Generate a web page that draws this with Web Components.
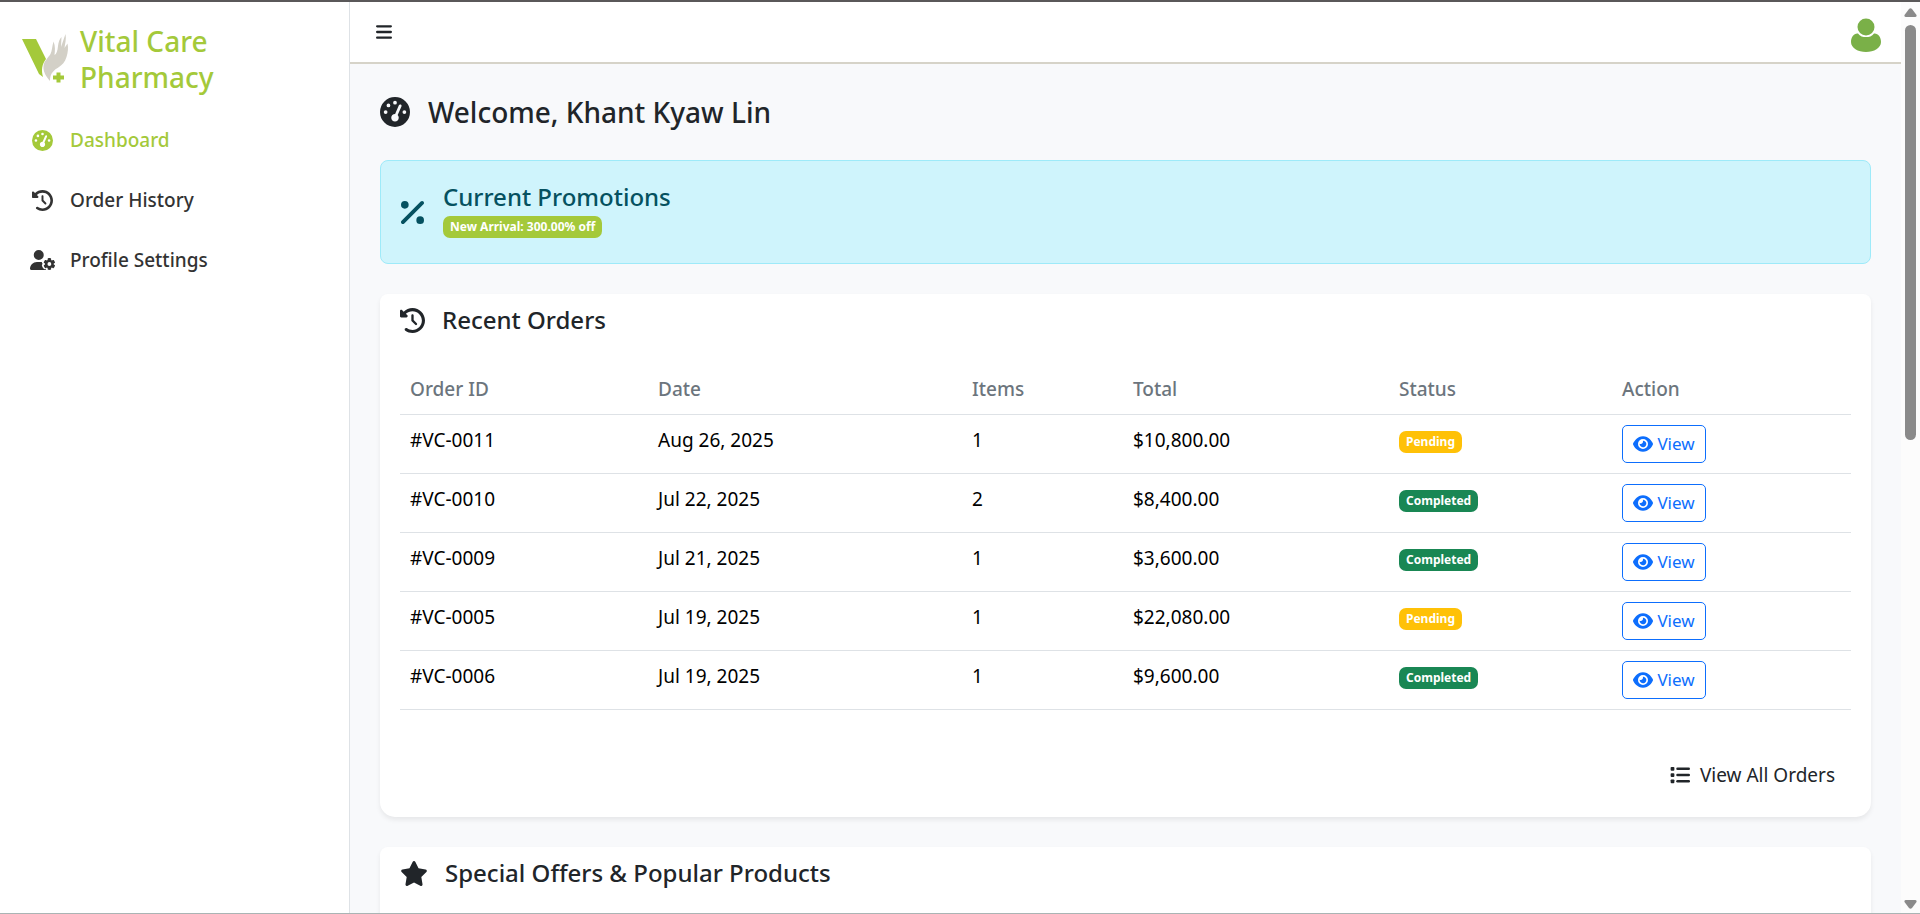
<!DOCTYPE html>
<html lang="en">
<head>
<meta charset="utf-8">
<title>Vital Care Pharmacy</title>
<style>
html, body { margin: 0; height: 100%; }
body { font: 19px/30px "Noto Sans", "Segoe UI", sans-serif; color: #212529; background: #f8f9fb; overflow: hidden; }
</style>
</head>
<body>
<vc-app></vc-app>
<script>
const ICONS = {
  gauge: ['0 0 512 512', '<path d="M0 256a256 256 0 1 1 512 0A256 256 0 1 1 0 256zM288 96a32 32 0 1 0 -64 0 32 32 0 1 0 64 0zM256 416c35.3 0 64-28.7 64-64c0-17.4-6.9-33.1-18.1-44.6L366 161.7c5.3-12.1-.2-26.3-12.3-31.6s-26.3 .2-31.6 12.3L257.9 288c-.6 0-1.3 0-1.9 0c-35.3 0-64 28.7-64 64s28.7 64 64 64zM176 144a32 32 0 1 0 -64 0 32 32 0 1 0 64 0zM96 288a32 32 0 1 0 0-64 32 32 0 1 0 0 64zm352-32a32 32 0 1 0 -64 0 32 32 0 1 0 64 0z"/>'],
  history: ['0 0 512 512', '<path d="M75 75L41 41C25.9 25.9 0 36.6 0 57.9V168c0 13.3 10.7 24 24 24H134.1c21.4 0 32.1-25.9 17-41l-30.8-30.8C155 85.5 203 64 256 64c106 0 192 86 192 192s-86 192-192 192c-40.8 0-78.6-12.7-109.7-34.4c-14.5-10.1-34.4-6.6-44.6 7.9s-6.6 34.4 7.9 44.6C151.2 495 201.7 512 256 512c141.4 0 256-114.6 256-256S397.4 0 256 0C185.3 0 121.3 28.7 75 75zm181 53c-13.3 0-24 10.7-24 24V256c0 6.4 2.5 12.5 7 17l72 72c9.4 9.4 24.6 9.4 33.9 0s9.4-24.6 0-33.9l-65-65V152c0-13.3-10.7-24-24-24z"/>'],
  usergear: ['0 0 640 512', '<path d="M224 0a128 128 0 1 1 0 256A128 128 0 1 1 224 0zM178.3 304h91.4c11.8 0 23.4 1.2 34.5 3.3c-2.1 18.5 7.4 35.6 21.8 44.8c-16.6 10.6-26.7 31.6-20 53.3c4 12.9 9.4 25.5 16.4 37.6s15.2 23.1 24.4 33c15.7 16.9 39.6 18.4 57.2 8.7v.9c0 9.2 2.7 18.5 7.9 26.3H29.7C13.3 512 0 498.7 0 482.3C0 383.8 79.8 304 178.3 304z"/><path transform="translate(16 8)" d="M436 218.2c0-7 4.5-13.3 11.3-14.8c10.5-2.4 21.5-3.7 32.7-3.7s22.2 1.3 32.7 3.7c6.8 1.5 11.3 7.8 11.3 14.8v30.6c7.9 3.4 15.4 7.7 22.3 12.8l24.9-14.3c6.1-3.5 13.7-2.7 18.5 2.4c7.6 8.1 14.3 17.2 20.1 27.2s10.3 20.4 13.5 31c2.1 6.7-1.1 13.7-7.2 17.2l-25 14.4c.4 4 .7 8.1 .7 12.3s-.2 8.2-.7 12.3l25 14.4c6.1 3.5 9.2 10.5 7.2 17.2c-3.3 10.6-7.8 21-13.5 31s-12.5 19.1-20.1 27.2c-4.8 5.1-12.5 5.9-18.5 2.4l-24.9-14.3c-6.9 5.1-14.3 9.4-22.3 12.8l0 30.6c0 7-4.5 13.3-11.3 14.8c-10.5 2.4-21.5 3.7-32.7 3.7s-22.2-1.3-32.7-3.7c-6.8-1.5-11.3-7.8-11.3-14.8V454.8c-8-3.4-15.6-7.7-22.5-12.9l-24.7 14.3c-6.1 3.5-13.7 2.7-18.5-2.4c-7.6-8.1-14.3-17.2-20.1-27.2s-10.3-20.4-13.5-31c-2.1-6.7 1.1-13.7 7.2-17.2l24.8-14.3c-.4-4.1-.7-8.2-.7-12.4s.2-8.3 .7-12.4L343.8 325c-6.1-3.5-9.2-10.5-7.2-17.2c3.3-10.6 7.7-21 13.5-31s12.5-19.1 20.1-27.2c4.8-5.1 12.4-5.9 18.5-2.4l24.8 14.3c6.9-5.1 14.5-9.4 22.5-12.9V218.2zm92.1 133.5a48.1 48.1 0 1 0 -96.1 0 48.1 48.1 0 1 0 96.1 0z"/>'],
  bars: ['0 0 448 512', '<rect y="64" width="448" height="64" rx="32"/><rect y="224" width="448" height="64" rx="32"/><rect y="384" width="448" height="64" rx="32"/>'],
  percent: ['0 0 384 512', '<path d="M374.6 118.6c12.5-12.5 12.5-32.8 0-45.3s-32.8-12.5-45.3 0l-320 320c-12.5 12.5-12.5 32.8 0 45.3s32.8 12.5 45.3 0l320-320zM128 128A64 64 0 1 0 0 128a64 64 0 1 0 128 0zM384 384a64 64 0 1 0 -128 0 64 64 0 1 0 128 0z"/>'],
  eye: ['0 0 576 512', '<path d="M288 32c-80.8 0-145.5 36.8-192.6 80.6C48.6 156 17.3 208 2.5 243.7c-3.3 7.9-3.3 16.7 0 24.6C17.3 304 48.6 356 95.4 399.4C142.5 443.2 207.2 480 288 480s145.5-36.8 192.6-80.6c46.8-43.5 78.1-95.4 93-131.1c3.3-7.9 3.3-16.7 0-24.6c-14.9-35.7-46.2-87.7-93-131.1C433.5 68.8 368.8 32 288 32zM144 256a144 144 0 1 1 288 0 144 144 0 1 1 -288 0zm144-64c0 35.3-28.7 64-64 64c-7.1 0-13.9-1.2-20.3-3.3c-5.5-1.8-11.9 1.6-11.7 7.4c.3 6.9 1.3 13.8 3.2 20.7c13.7 51.2 66.4 81.6 117.6 67.9s81.6-66.4 67.9-117.6c-11.1-41.5-47.8-69.4-88.6-71.1c-5.8-.2-9.2 6.1-7.4 11.7c2.1 6.4 3.3 13.2 3.3 20.3z"/>'],
  star: ['0 0 576 512', '<path d="M316.9 18C311.6 7 300.4 0 288.1 0s-23.4 7-28.8 18L195 150.3 51.4 171.5c-12 1.8-22 10.2-25.7 21.7s-.7 24.2 7.9 32.7L137.8 329 113.2 474.7c-2 12 3 24.2 12.9 31.3s23 8 33.8 2.3l128.3-68.5 128.3 68.5c10.8 5.7 23.9 4.9 33.8-2.3s14.9-19.3 12.9-31.3L438.5 329 542.7 225.9c8.6-8.5 11.7-21.2 7.9-32.7s-13.7-19.9-25.7-21.7L381.2 150.3 316.9 18z"/>'],
  list: ['0 0 512 512', '<rect x="16" y="48" width="96" height="96" rx="24"/><rect x="16" y="208" width="96" height="96" rx="24"/><rect x="16" y="368" width="96" height="96" rx="24"/><rect x="160" y="64" width="352" height="64" rx="32"/><rect x="160" y="224" width="352" height="64" rx="32"/><rect x="160" y="384" width="352" height="64" rx="32"/>'],
  logo: ['0 0 48 50', '<path fill="#a4c93a" d="M0 5H14L24 25C20 30 19 36 21 43L17 40Z"/><path fill="#d3d0c7" d="M28 47C24 42 21 38 21.500 32C22 27 26 24 28.500 20C30 17 30 13 31.500 7.500C33.500 12 33 17 32.500 21C34.500 20 35.500 17 36 12C36.500 8 37.500 5 39.500 3L39 13L43.500 0C44.500 5 43 10 42.500 14L45.500 9.500C46.500 14 46 18 44.500 23C43 28 40 31 37 33C32 36 28 39 28 47Z"/><path fill="#a4c93a" d="M34.500 38.500h4v3h3.500v4h-3.500v3h-4v-3H31v-4h3.500z"/>'],
  avatar: ['0 0 30 34', '<circle cx="15" cy="9" r="8.5"/><path d="M0 24C0 19 3 15 7 15.500C9 18.500 12 19 15 19S21 18.500 23 15.500C27 15 30 19 30 24C30 30 23 34 15 34S0 30 0 24Z"/>'],
  up: ['0 0 13 9', '<path d="M5 1Q6.500-.5 8 1L12.500 7Q13 9 11 9H2Q0 9 .5 7Z"/>'],
  down: ['0 0 13 9', '<path d="M5 8Q6.500 9.500 8 8L12.500 2Q13 0 11 0H2Q0 0 .5 2Z"/>']
};

const define = (name, css, html) => customElements.define(name, class extends HTMLElement {
  constructor() {
    super();
    const t = document.createElement('template');
    t.innerHTML = `<style>*,:host{box-sizing:border-box}:host{display:block}${css}</style>` +
      (typeof html === 'function' ? html(this) : html);
    this.attachShadow({ mode: 'open' }).append(t.content.cloneNode(true));
  }
});

define('vc-icon', ':host{flex:none}svg{display:block;width:100%;height:100%;fill:currentColor}',
  el => { const [box, body] = ICONS[el.getAttribute('name')]; return `<svg viewBox="${box}" aria-hidden="true">${body}</svg>`; });

define('vc-nav-item', `
  a{display:flex;align-items:center;gap:15px;height:60px;padding:0 30px;color:#333;text-decoration:none;font-weight:500}
  :host([active]) a{color:#a4c93a}
  .slot{width:25px;flex:none;display:flex;justify-content:center}
  vc-icon{width:21px;height:21px}
  vc-icon[name=usergear]{width:25px;height:20px}`,
  el => `<a href="#"><span class="slot"><vc-icon name="${el.getAttribute('icon')}"></vc-icon></span><span><slot></slot></span></a>`);

define('vc-sidebar', `
  :host{background:#fff;border-right:1px solid #dee2e6}
  .brand{display:flex;align-items:center;gap:10px;padding:21px 22px 15px;color:#a4c93a;font-weight:500;font-size:28px;line-height:36px;text-decoration:none}
  .brand vc-icon{width:48px;height:50px}
  nav{display:block}`,
  `<a class="brand" href="#"><vc-icon name="logo"></vc-icon><span>Vital Care<br>Pharmacy</span></a>
  <nav><vc-nav-item icon="gauge" active>Dashboard</vc-nav-item><vc-nav-item icon="history">Order History</vc-nav-item><vc-nav-item icon="usergear">Profile Settings</vc-nav-item></nav>`);

define('vc-topbar', `
  :host{display:flex;justify-content:space-between;align-items:center;height:62px;padding:0 20px 0 26px;background:#fff;border-bottom:2px solid #d6d3c8}
  button{border:0;background:none;padding:0;color:#212529;display:block}
  .account{padding-top:6px}
  vc-icon[name=bars]{width:16px;height:20px}
  vc-icon[name=avatar]{width:30px;height:34px;color:#7ab048}`,
  `<button type="button" aria-label="Toggle menu"><vc-icon name="bars"></vc-icon></button>
  <button class="account" type="button" aria-label="Account"><vc-icon name="avatar"></vc-icon></button>`);

define('vc-badge', `
  :host{display:inline-block;padding:0 7px;border-radius:7px;color:#fff;background:#a4c93a;font-weight:700;font-size:12px;line-height:22px;vertical-align:middle}
  :host([kind=Pending]){background:#ffc107}
  :host([kind=Completed]){background:#198754}`, '<slot></slot>');

define('vc-promo', `
  :host{display:flex;align-items:center;gap:19px;height:104px;padding:0 20px;border:1px solid #9eeaf9;border-radius:8px;background:#cff4fc;color:#055160}
  h2{margin:0;font-weight:500;font-size:24px;line-height:30px}
  p{margin:0;display:flex;padding:4px 0}
  vc-icon{width:23px;height:31px}`,
  `<vc-icon name="percent"></vc-icon><div><h2>Current Promotions</h2><p><vc-badge>New Arrival: 300.00% off</vc-badge></p></div>`);

define('vc-card', `
  :host{background:#fff;border-radius:8px 8px 15px 15px;box-shadow:0 3px 5px rgba(0,0,0,.07);padding:0 20px}
  header{display:flex;align-items:center;gap:17px;height:52px}
  h2{margin:0;font-weight:500;font-size:24px;line-height:30px}
  vc-icon{width:25px;height:25px}
  vc-icon[name=star]{width:28px;height:25px}`,
  el => `<header><vc-icon name="${el.getAttribute('icon')}"></vc-icon><h2>${el.getAttribute('heading').replace('&', '&amp;')}</h2></header><slot></slot>`);

const ORDERS = [
  ['#VC-0011', 'Aug 26, 2025', '1', '$10,800.00', 'Pending'],
  ['#VC-0010', 'Jul 22, 2025', '2', '$8,400.00', 'Completed'],
  ['#VC-0009', 'Jul 21, 2025', '1', '$3,600.00', 'Completed'],
  ['#VC-0005', 'Jul 19, 2025', '1', '$22,080.00', 'Pending'],
  ['#VC-0006', 'Jul 19, 2025', '1', '$9,600.00', 'Completed']
];

define('vc-orders', `
  table{width:100%;margin-top:18px;border-collapse:separate;border-spacing:0;table-layout:fixed}
  th,td{padding:10px;text-align:left;vertical-align:top;border-bottom:1px solid #dee2e6}
  th{font-weight:500;color:#6c757d}
  td{color:#000}
  th:nth-child(1){width:248px}
  th:nth-child(2){width:314px}
  th:nth-child(3){width:161px}
  th:nth-child(4){width:266px}
  th:nth-child(5){width:223px}
  th:nth-child(6){width:239px}
  button{display:flex;align-items:center;justify-content:center;gap:4px;width:84px;height:38px;border:1px solid #0d6efd;border-radius:5px;background:#fff;color:#0d6efd;font:17px/26px "Noto Sans",sans-serif;padding:0}
  button vc-icon{width:20px;height:18px}
  footer{display:flex;justify-content:flex-end;padding:50px 16px 27px}
  a{display:flex;align-items:center;gap:10px;color:#212529;text-decoration:none}
  a vc-icon{width:20px;height:20px}`,
  `<table>
  <thead><tr><th>Order ID</th><th>Date</th><th>Items</th><th>Total</th><th>Status</th><th>Action</th></tr></thead>
  <tbody>${ORDERS.map(o => `<tr>${o.slice(0, 4).map(c => `<td>${c}</td>`).join('')}<td><vc-badge kind="${o[4]}">${o[4]}</vc-badge></td><td><button type="button"><vc-icon name="eye"></vc-icon>View</button></td></tr>`).join('')}</tbody></table>
  <footer><a href="#"><vc-icon name="list"></vc-icon>View All Orders</a></footer>`);

define('vc-scrollbar', `
  :host{display:grid;grid-template-rows:auto 1fr auto;justify-items:center;padding:6px 0 4px;background:#fcfcfc;color:#8a8a8a}
  i{display:block;width:11px;height:47%;margin-top:8px;border-radius:6px;background:#8a8a8a}
  vc-icon{width:13px;height:9px}`,
  '<vc-icon name="up"></vc-icon><i></i><vc-icon name="down"></vc-icon>');

define('vc-app', `
  :host{display:grid;grid-template-columns:350px 1fr 19px;height:100vh;border-top:2px solid #5a5859;border-bottom:1px solid #aab4b4;overflow:hidden}
  .page{display:grid;grid-template-rows:auto 1fr;min-width:0;min-height:0}
  main{display:flex;flex-direction:column;gap:30px;padding:30px 30px 0;overflow:hidden}
  main>*{flex:none}
  h1{display:flex;align-items:center;gap:18px;height:36px;margin:0;font-weight:500;font-size:28px;line-height:36px}
  h1 vc-icon{width:30px;height:30px}
  .offers{height:200px}`,
  `<vc-sidebar></vc-sidebar>
  <div class="page"><vc-topbar></vc-topbar><main>
    <h1><vc-icon name="gauge"></vc-icon>Welcome, Khant Kyaw Lin</h1>
    <vc-promo></vc-promo>
    <vc-card icon="history" heading="Recent Orders"><vc-orders></vc-orders></vc-card>
    <vc-card class="offers" icon="star" heading="Special Offers &amp; Popular Products"></vc-card>
  </main></div>
  <vc-scrollbar></vc-scrollbar>`);
</script>
</body>
</html>
